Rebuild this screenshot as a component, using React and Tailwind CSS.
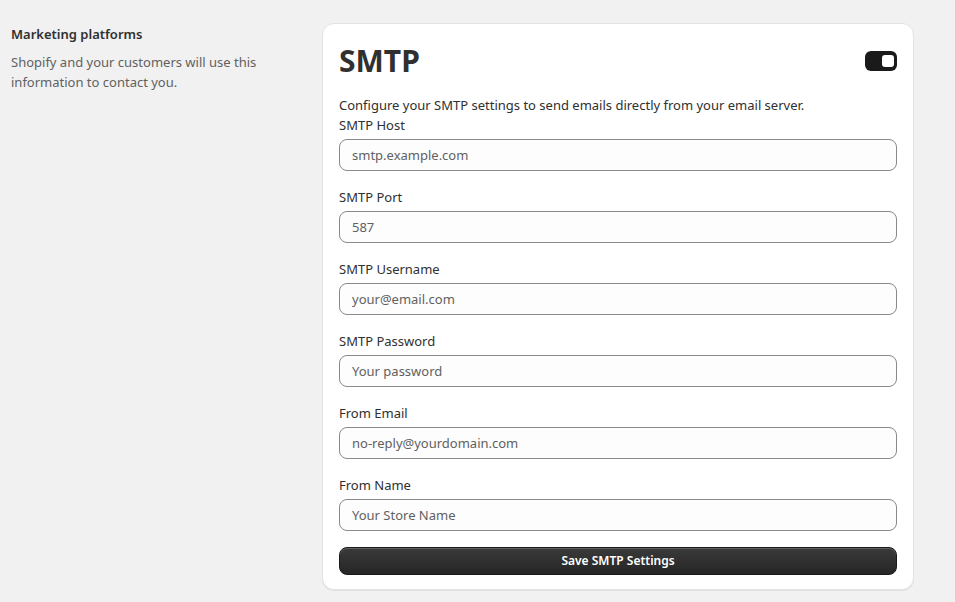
import React from 'react';

const fields = [
  { label: 'SMTP Host', placeholder: 'smtp.example.com' },
  { label: 'SMTP Port', placeholder: '587' },
  { label: 'SMTP Username', placeholder: 'your@email.com' },
  { label: 'SMTP Password', placeholder: 'Your password' },
  { label: 'From Email', placeholder: 'no-reply@yourdomain.com' },
  { label: 'From Name', placeholder: 'Your Store Name' },
];

const App = () => {
  return (
    <div className="min-h-screen bg-[#f1f1f1] font-['Noto_Sans',sans-serif] text-[#303030]">
      <div className="flex pt-[23px]">
        <div className="w-[322px] shrink-0 pl-[11px] pr-[60px] pt-[1px]">
          <h2 className="text-[13px] font-semibold leading-5 text-[#303030]">Marketing platforms</h2>
          <p className="mt-2 text-[13px] leading-5 text-[#616161]">
            Shopify and your customers will use this information to contact you.
          </p>
        </div>

        <div className="w-[592px] shrink-0 rounded-xl border border-[#e3e3e3] bg-white px-4 pt-4 pb-[14px] shadow-[0_1px_0_rgba(0,0,0,0.07)]">
          <div className="flex items-center justify-between">
            <h1 className="text-[30px] font-bold leading-[42px] text-[#303030]">SMTP</h1>
            <button className="flex h-5 w-8 items-center justify-end rounded-md bg-[#1a1a1a] px-[3px]">
              <span className="h-3 w-3 rounded-[3px] bg-white"></span>
            </button>
          </div>

          <p className="mt-[13px] text-[13px] leading-5 text-[#303030]">
            Configure your SMTP settings to send emails directly from your email server.
          </p>

          <div className="flex flex-col gap-4">
            {fields.map(field => (
              <div key={field.label} className="flex flex-col gap-1">
                <label className="text-[13px] leading-5 text-[#303030]">{field.label}</label>
                <input
                  type="text"
                  placeholder={field.placeholder}
                  className="h-8 w-full rounded-lg border border-[#8a8a8a] bg-[#fdfdfd] px-3 text-[13px] text-[#303030] placeholder:text-[#616161] outline-none"
                />
              </div>
            ))}
          </div>

          <button className="mt-4 h-7 w-full rounded-lg border border-[#1a1a1a] bg-gradient-to-b from-[#3a3a3a] to-[#262626] text-[12px] font-semibold text-white shadow-[inset_0_1px_0_rgba(255,255,255,0.2)]">
            Save SMTP Settings
          </button>
        </div>
      </div>
    </div>
  );
};

export default App;
